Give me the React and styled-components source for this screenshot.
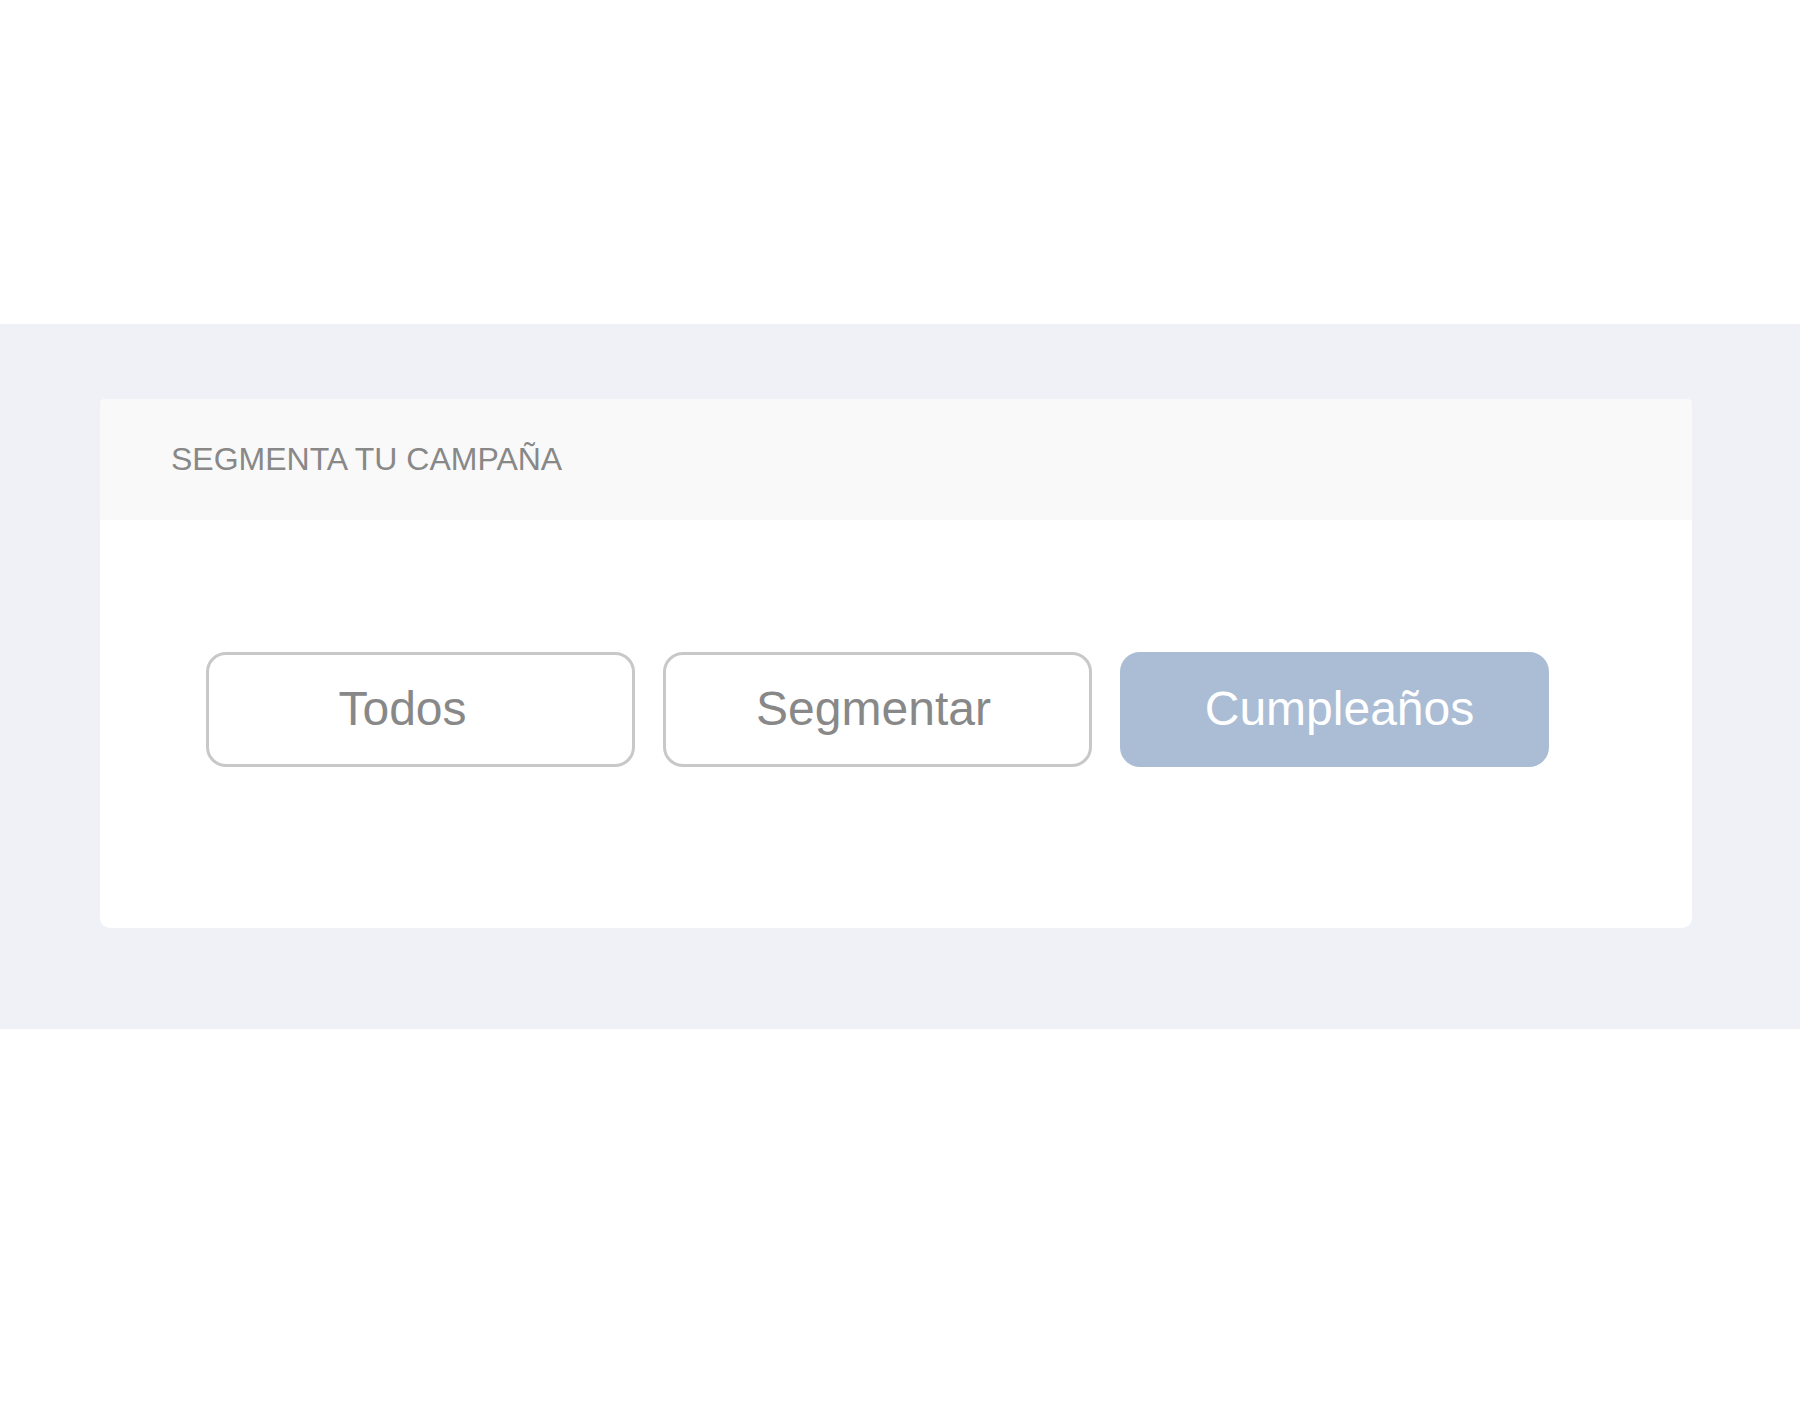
import React, { useState } from 'react'
import styled, { createGlobalStyle } from 'styled-components'

const GlobalStyle = createGlobalStyle`
  html, body {
    margin: 0;
    padding: 0;
    background: #fff;
    font-family: 'Liberation Sans', Arial, sans-serif;
  }
`

const Page = styled.div`
  width: 1800px;
  height: 1413px;
  padding-top: 324px;
  box-sizing: border-box;
  background: #fff;
`

const Band = styled.section`
  height: 705px;
  box-sizing: border-box;
  padding: 75px 108px 0 100px;
  background: #f0f1f6;
`

const Card = styled.div`
  height: 529px;
  background: #fff;
  border-radius: 5px 5px 10px 10px;
  overflow: hidden;
  display: flex;
  flex-direction: column;
`

const CardHeader = styled.header`
  height: 121px;
  flex: 0 0 121px;
  display: flex;
  align-items: center;
  padding-left: 71px;
  background: #f9f9f9;
  color: #888;
  font-size: 32px;
  text-transform: uppercase;
`

const CardBody = styled.div`
  flex: 1;
  display: flex;
  align-items: flex-start;
  gap: 28px;
  padding: 132px 0 0 106px;
`

const Option = styled.button`
  width: 429px;
  height: 115px;
  box-sizing: border-box;
  border-radius: 20px;
  border: 3px solid ${p => (p.$active ? '#aabdd5' : '#c8c8c8')};
  background: ${p => (p.$active ? '#aabdd5' : '#fff')};
  color: ${p => (p.$active ? '#fff' : '#888')};
  font-family: 'Liberation Sans', Arial, sans-serif;
  font-size: 48px;
  line-height: 1;
  padding: 0;
  cursor: pointer;
  display: flex;
  align-items: center;
  justify-content: center;
`

const Label = styled.span`
  display: block;
  transform: translate(${p => p.$shift}px, -1px);
`

const options = [
  { id: 'todos', label: 'Todos', shift: -18 },
  { id: 'segmentar', label: 'Segmentar', shift: -4 },
  { id: 'cumpleanos', label: 'Cumpleaños', shift: 5 },
]

export default function App() {
  const [selected, setSelected] = useState('cumpleanos')

  return (
    <Page>
      <GlobalStyle />
      <Band>
        <Card>
          <CardHeader>Segmenta tu campaña</CardHeader>
          <CardBody>
            {options.map(option => (
              <Option key={option.id} $active={selected === option.id} onClick={() => setSelected(option.id)}>
                <Label $shift={option.shift}>{option.label}</Label>
              </Option>
            ))}
          </CardBody>
        </Card>
      </Band>
    </Page>
  )
}
